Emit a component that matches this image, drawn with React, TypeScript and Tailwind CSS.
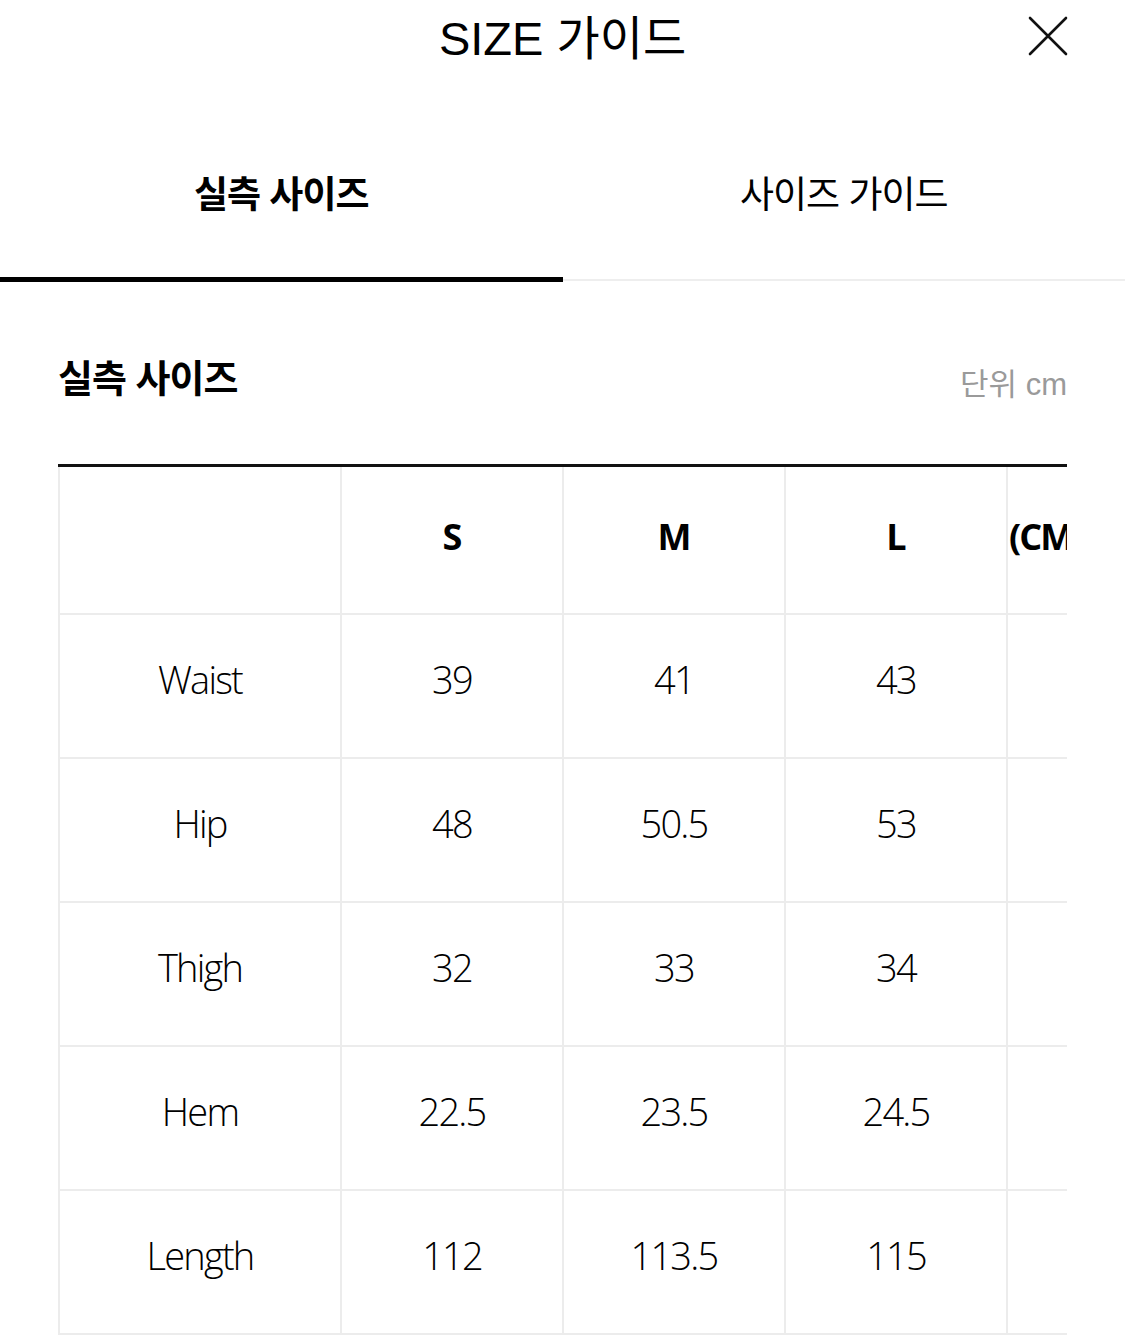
type Row = {
  label: string
  values: string[]
}

const sizes = ['S', 'M', 'L']

const rows: Row[] = [
  { label: 'Waist', values: ['39', '41', '43'] },
  { label: 'Hip', values: ['48', '50.5', '53'] },
  { label: 'Thigh', values: ['32', '33', '34'] },
  { label: 'Hem', values: ['22.5', '23.5', '24.5'] },
  { label: 'Length', values: ['112', '113.5', '115'] },
]

const krFont = "font-['Liberation_Sans','Noto_Sans_CJK_KR',sans-serif]"
const cellFont = "font-['Open_Sans','Noto_Sans',sans-serif]"

function CloseIcon() {
  return (
    <svg width="40" height="40" viewBox="0 0 40 40" fill="none" stroke="currentColor" strokeWidth="2.6" strokeLinecap="round">
      <path d="M2 2L38 38M38 2L2 38" />
    </svg>
  )
}

export default function App() {
  return (
    <div className="w-[1125px] h-[1335px] bg-white overflow-hidden text-black">
      {/* Header */}
      <div className="relative h-[76px] flex items-center justify-center">
        <h1 className={`${krFont} text-[47px] leading-none font-normal`}>SIZE 가이드</h1>
        <button className="absolute right-[57px] top-[16px] text-[#111]" aria-label="닫기">
          <CloseIcon />
        </button>
      </div>

      {/* Tabs */}
      <div className="flex h-[206px]">
        <div className="flex-1 flex flex-col">
          <div className={`${krFont} flex-1 flex items-start justify-center pt-[97px] text-[37px] leading-[46px] font-bold tracking-[-1px]`}>
            실측 사이즈
          </div>
          <div className="h-[5px] bg-black" />
        </div>
        <div className="flex-1 flex flex-col">
          <div className={`${krFont} flex-1 flex items-start justify-center pt-[97px] text-[37px] leading-[46px] font-normal tracking-[-1px]`}>
            사이즈 가이드
          </div>
          <div className="h-[2px] bg-[#eeeeee] mb-[1px]" />
        </div>
      </div>

      {/* Section */}
      <div className="px-[58px]">
        <div className="flex items-end justify-between h-[182px]">
          <h2 className={`${krFont} text-[38px] leading-[46px] font-bold tracking-[-1px] mb-[62px]`}>실측 사이즈</h2>
          <span className={`${krFont} text-[31px] leading-[40px] text-[#9a9a9a] mb-[59px]`}>단위 cm</span>
        </div>
        <div className="h-[3px] bg-[#111]" />

        <div className="overflow-hidden">
          <div className={`${cellFont} w-[1172px] border-l-2 border-[#ececec]`}>
            <div className="flex h-[148px] border-b-2 border-[#ececec]">
              <div className="w-[282px] shrink-0 border-r-2 border-[#ececec]" />
              {sizes.map((s) => (
                <div key={s} className="w-[222px] shrink-0 border-r-2 border-[#ececec] flex items-center justify-center pb-[6px] text-[36px] font-bold tracking-[-1px]">
                  {s}
                </div>
              ))}
              <div className="w-[222px] shrink-0 flex items-center pb-[6px] pl-[1px] text-[36px] font-bold tracking-[-2px]">
                (CM)
              </div>
            </div>
            {rows.map((row) => (
              <div key={row.label} className="flex h-[144px] border-b-2 border-[#ececec]">
                <div className="w-[282px] shrink-0 border-r-2 border-[#ececec] flex items-center justify-center pb-[13px] text-[38px] tracking-[-1.8px] font-light">
                  {row.label}
                </div>
                {row.values.map((v, i) => (
                  <div key={i} className="w-[222px] shrink-0 border-r-2 border-[#ececec] flex items-center justify-center pb-[13px] text-[38px] tracking-[-1.8px] font-light">
                    {v}
                  </div>
                ))}
                <div className="w-[222px] shrink-0" />
              </div>
            ))}
          </div>
        </div>
      </div>
    </div>
  )
}
